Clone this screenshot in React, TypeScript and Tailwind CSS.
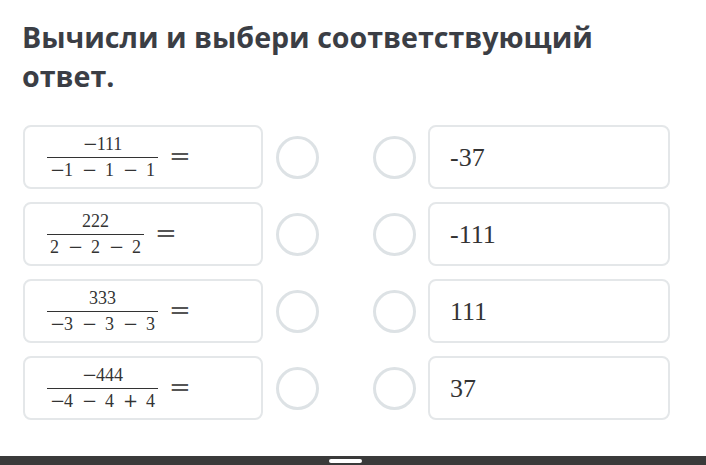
import React from "react";

type Frac = { num: string[]; den: string[] };

const rows: { frac: Frac; answer: string }[] = [
  { frac: { num: ["-", "111"], den: ["-", "1", "−", "1", "−", "1"] }, answer: "-37" },
  { frac: { num: ["222"], den: ["2", "−", "2", "−", "2"] }, answer: "-111" },
  { frac: { num: ["333"], den: ["-", "3", "−", "3", "−", "3"] }, answer: "111" },
  { frac: { num: ["-", "444"], den: ["-", "4", "−", "4", "+", "4"] }, answer: "37" },
];

const serif = { fontFamily: '"Liberation Serif", "DejaVu Serif", serif' };
const opFont = { fontFamily: '"DejaVu Serif", "Liberation Serif", serif' };

// "-" = unary minus (no spacing), "−" / "+" = binary operator (spaced)
function MathLine({ parts }: { parts: string[] }) {
  return (
    <div className="flex h-[18px] items-center justify-center px-[3px] text-[18px] leading-[18px]">
      {parts.map((p, i) => {
        if (p === "-")
          return (
            <span key={i} className="inline-block w-[14px] text-center" style={opFont}>
              −
            </span>
          );
        if (p === "−" || p === "+")
          return (
            <span key={i} className="mx-[9px] inline-block w-[14px] text-center" style={opFont}>
              {p}
            </span>
          );
        return <span key={i}>{p}</span>;
      })}
    </div>
  );
}

function Fraction({ frac }: { frac: Frac }) {
  return (
    <div className="flex items-center text-[#333]" style={serif}>
      <div className="flex flex-col">
        <MathLine parts={frac.num} />
        <div className="mt-[4px] mb-[3px] h-px bg-[#333]" />
        <MathLine parts={frac.den} />
      </div>
      <span className="ml-[11px] -mt-[3px] text-[26px] leading-none text-[#555]" style={opFont}>
        =
      </span>
    </div>
  );
}

function Radio() {
  return <div className="h-[43px] w-[43px] shrink-0 rounded-full border-[3px] border-[#dde2e5] bg-white" />;
}

export default function App() {
  return (
    <div className="flex h-[465px] w-[706px] flex-col overflow-hidden bg-white">
      <h1
        className="px-[22px] pt-[17px] text-[28.6px] font-bold leading-[39px] text-[#3b3e45]"
        style={{ fontFamily: '"Open Sans", "Noto Sans", sans-serif' }}
      >
        Вычисли и выбери соответствующий
        <br />
        ответ.
      </h1>
      <div className="mt-[30px] flex flex-col gap-[13px] pl-[23px]">
        {rows.map((r, i) => (
          <div key={i} className="flex h-[64px] items-center">
            <div className="flex h-full w-[240px] items-center rounded-[8px] border-2 border-[#e4e7e9] pl-[22px]">
              <Fraction frac={r.frac} />
            </div>
            <div className="ml-[13px]">
              <Radio />
            </div>
            <div className="ml-[54px]">
              <Radio />
            </div>
            <div
              className="ml-[12px] flex h-full w-[242px] items-center rounded-[8px] border-2 border-[#e4e7e9] pl-[20px] text-[26px] text-[#333]"
              style={serif}
            >
              {r.answer}
            </div>
          </div>
        ))}
      </div>
      <div className="mt-auto h-[9px] bg-[#3a3a3a] pl-[329px] pt-[3px]">
        <div className="h-[4px] w-[33px] rounded-[2px] bg-white" />
      </div>
    </div>
  );
}
